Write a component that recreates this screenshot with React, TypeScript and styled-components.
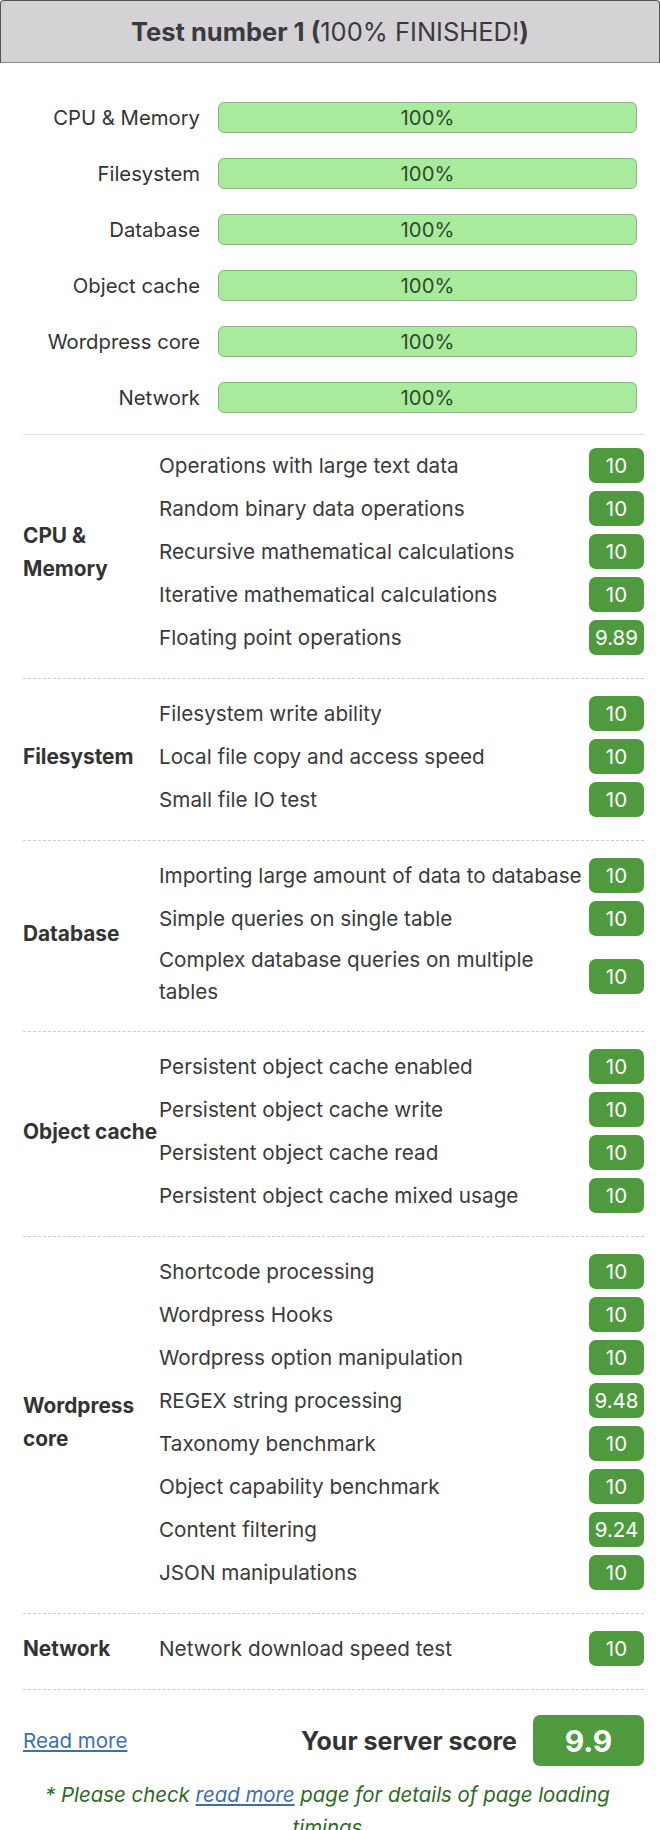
import styled, { createGlobalStyle } from 'styled-components';

const GlobalStyle = createGlobalStyle`
    body {
        margin: 0;
        background: #fff;
        font-family: Inter, "Liberation Sans", Arial, sans-serif;
        color: #333;
    }
`;

const progress = ['CPU & Memory', 'Filesystem', 'Database', 'Object cache', 'Wordpress core', 'Network'];

type Test = { name: string; score: string };
type Group = { title: string; tests: Test[] };

const groups: Group[] = [
    {
        title: 'CPU & Memory',
        tests: [
            { name: 'Operations with large text data', score: '10' },
            { name: 'Random binary data operations', score: '10' },
            { name: 'Recursive mathematical calculations', score: '10' },
            { name: 'Iterative mathematical calculations', score: '10' },
            { name: 'Floating point operations', score: '9.89' },
        ],
    },
    {
        title: 'Filesystem',
        tests: [
            { name: 'Filesystem write ability', score: '10' },
            { name: 'Local file copy and access speed', score: '10' },
            { name: 'Small file IO test', score: '10' },
        ],
    },
    {
        title: 'Database',
        tests: [
            { name: 'Importing large amount of data to database', score: '10' },
            { name: 'Simple queries on single table', score: '10' },
            { name: 'Complex database queries on multiple tables', score: '10' },
        ],
    },
    {
        title: 'Object cache',
        tests: [
            { name: 'Persistent object cache enabled', score: '10' },
            { name: 'Persistent object cache write', score: '10' },
            { name: 'Persistent object cache read', score: '10' },
            { name: 'Persistent object cache mixed usage', score: '10' },
        ],
    },
    {
        title: 'Wordpress core',
        tests: [
            { name: 'Shortcode processing', score: '10' },
            { name: 'Wordpress Hooks', score: '10' },
            { name: 'Wordpress option manipulation', score: '10' },
            { name: 'REGEX string processing', score: '9.48' },
            { name: 'Taxonomy benchmark', score: '10' },
            { name: 'Object capability benchmark', score: '10' },
            { name: 'Content filtering', score: '9.24' },
            { name: 'JSON manipulations', score: '10' },
        ],
    },
    {
        title: 'Network',
        tests: [{ name: 'Network download speed test', score: '10' }],
    },
];

export default function App() {
    return (
        <>
            <GlobalStyle />
            <Card>
                <Header>
                    <b>Test number 1 (</b>100% FINISHED!<b>)</b>
                </Header>
                <Content>
                    <Progress>
                        {progress.map((p) => (
                            <ProgressRow key={p}>
                                <ProgressLabel>{p}</ProgressLabel>
                                <Bar>100%</Bar>
                            </ProgressRow>
                        ))}
                    </Progress>
                    <Divider />
                    {groups.map((g, i) => (
                        <Section key={g.title} first={i === 0}>
                            <Category>{g.title}</Category>
                            <Tests>
                                {g.tests.map((t) => (
                                    <TestRow key={t.name}>
                                        <TestName>{t.name}</TestName>
                                        <Badge>{t.score}</Badge>
                                    </TestRow>
                                ))}
                            </Tests>
                        </Section>
                    ))}
                    <Footer>
                        <ReadMore href="#">Read more</ReadMore>
                        <Total>
                            <TotalLabel>Your server score</TotalLabel>
                            <TotalBadge>9.9</TotalBadge>
                        </Total>
                    </Footer>
                    <Note>
                        * Please check <NoteLink href="#">read more</NoteLink> page for details of page loading timings
                    </Note>
                </Content>
            </Card>
        </>
    );
}

const Card = styled.div`
    width: 660px;
`;

const Header = styled.div`
    box-sizing: border-box;
    height: 63px;
    background: #d4d2d5;
    border: 1px solid #555;
    border-bottom-color: #888;
    border-radius: 4px 4px 0 0;
    text-align: center;
    font-size: 25.5px;
    line-height: 62px;
    color: #3a3a3f;
    b {
        font-weight: 700;
    }
`;

const Content = styled.div`
    padding: 0 16px 0 23px;
`;

const Progress = styled.div`
    display: flex;
    flex-direction: column;
    gap: 25px;
    padding: 39px 7px 0 0;
`;

const ProgressRow = styled.div`
    display: grid;
    grid-template-columns: 177px 1fr;
    column-gap: 18px;
    align-items: center;
`;

const ProgressLabel = styled.div`
    text-align: right;
    font-size: 20.3px;
    color: #333;
`;

const Bar = styled.div`
    box-sizing: border-box;
    height: 31px;
    background: #a8eb9d;
    border: 1px solid #8fb08a;
    border-radius: 6px;
    font-size: 20.3px;
    line-height: 29px;
    text-align: center;
    color: #2f4a2c;
`;

const Divider = styled.div`
    margin-top: 21px;
    border-top: 1px solid #ddd;
`;

const Section = styled.div<{ first: boolean }>`
    display: flex;
    padding: ${({ first }) => (first ? '9px' : '13px')} 0 19px;
    border-bottom: 1px dashed #ccc;
`;

const Category = styled.div`
    flex: 0 0 136px;
    display: flex;
    align-items: center;
    font-size: 20.8px;
    font-weight: 700;
    line-height: 33px;
    color: #333;
`;

const Tests = styled.div`
    flex: 1;
    display: flex;
    flex-direction: column;
`;

const TestRow = styled.div`
    display: flex;
    align-items: center;
    padding: 4px 0;
`;

const TestName = styled.div`
    flex: 1;
    margin-right: 4px;
    font-size: 20.7px;
    line-height: 32px;
    color: #3a3a3a;
`;

const Badge = styled.div`
    flex: 0 0 55px;
    height: 35px;
    border-radius: 7px;
    background: #4f9a3f;
    color: #fff;
    font-size: 20.5px;
    display: flex;
    align-items: center;
    justify-content: center;
`;

const Footer = styled.div`
    display: flex;
    justify-content: space-between;
    align-items: center;
    padding-top: 25px;
`;

const ReadMore = styled.a`
    font-size: 20.5px;
    color: #3b6fb0;
    text-decoration: underline;
`;

const Total = styled.div`
    display: flex;
    align-items: center;
    gap: 16px;
`;

const TotalLabel = styled.div`
    font-size: 25px;
    font-weight: 700;
    color: #333;
`;

const TotalBadge = styled.div`
    width: 111px;
    height: 51px;
    border-radius: 7px;
    background: #4f9a3f;
    color: #fff;
    font-size: 30px;
    font-weight: 700;
    display: flex;
    align-items: center;
    justify-content: center;
`;

const Note = styled.p`
    margin: 12px 0 0;
    padding: 0 26px 0 14px;
    text-align: center;
    font-size: 20.4px;
    line-height: 33px;
    font-style: italic;
    color: #2d6a1f;
`;

const NoteLink = styled.a`
    color: #3b6fb0;
    text-decoration: underline;
`;
